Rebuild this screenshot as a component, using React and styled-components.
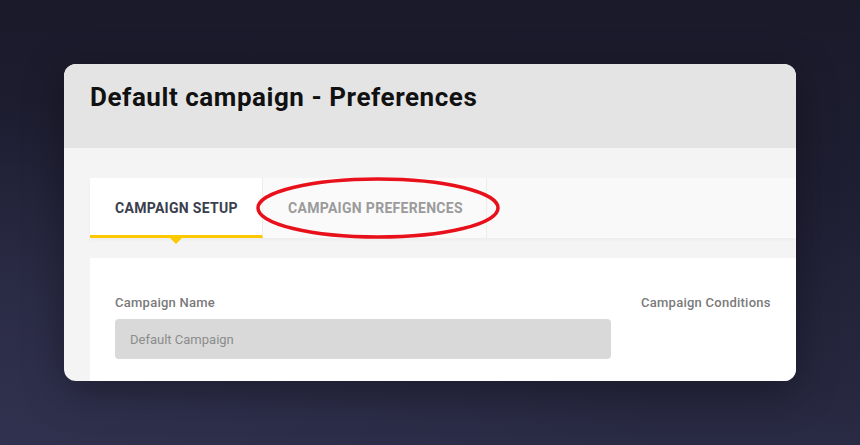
import React from "react";
import styled, { createGlobalStyle } from "styled-components";

const GlobalStyle = createGlobalStyle`
  html, body {
    margin: 0;
    padding: 0;
    width: 100%;
    height: 100%;
  }
  body {
    font-family: Roboto, "Liberation Sans", sans-serif;
    background: #1d1d30;
  }
`;

const Backdrop = styled.div`
  width: 860px;
  height: 445px;
  box-sizing: border-box;
  padding: 64px 64px 0 64px;
  background: radial-gradient(ellipse at 0% 100%, #30314e 0%, rgba(48, 49, 78, 0) 55%),
    linear-gradient(180deg, #1a1a2b 0%, #1e1e32 40%, #292a43 100%);
  overflow: hidden;
`;

const Card = styled.div`
  position: relative;
  width: 732px;
  height: 317px;
  border-radius: 12px;
  overflow: hidden;
  background: #f4f4f4;
  box-shadow: 0 10px 40px rgba(0, 0, 0, 0.35);
  display: flex;
  flex-direction: column;
`;

const Header = styled.div`
  height: 84px;
  flex-shrink: 0;
  background: #e4e4e4;
  box-sizing: border-box;
  padding: 18px 26px 0;
`;

const Title = styled.h1`
  margin: 0;
  font-size: 26px;
  font-weight: 700;
  color: #111;
  letter-spacing: 0.55px;
`;

const Body = styled.div`
  flex: 1;
  padding: 30px 0 0 26px;
  display: flex;
  flex-direction: column;
  gap: 20px;
`;

const TabBar = styled.div`
  display: flex;
  height: 60px;
  background: #f9f9f9;
  box-shadow: 0 2px 4px rgba(0, 0, 0, 0.03);
`;

const Tab = styled.div`
  position: relative;
  display: flex;
  align-items: center;
  flex-shrink: 0;
  box-sizing: border-box;
  padding-left: 25px;
  width: ${(p) => p.$width}px;
  white-space: nowrap;
  background: ${(p) => (p.$active ? "#fff" : "#fafafa")};
  border-right: 1px solid #ececec;
  font-size: 14px;
  font-weight: 700;
  letter-spacing: 0.3px;
  color: ${(p) => (p.$active ? "#3a3e4d" : "#9b9b9b")};
  ${(p) =>
    p.$active &&
    `
    border-bottom: 3px solid #fcc900;
    padding-top: 3px;
    &::after {
      content: "";
      position: absolute;
      left: 50%;
      bottom: -9px;
      transform: translateX(-50%);
      border-left: 6px solid transparent;
      border-right: 6px solid transparent;
      border-top: 6px solid #fcc900;
    }
  `}
`;

const Panel = styled.div`
  flex: 1;
  background: #fff;
  padding: 37px 25px 0;
  display: flex;
  gap: 30px;
`;

const Field = styled.div`
  display: flex;
  flex-direction: column;
  gap: 9px;
  width: ${(p) => (p.$width ? `${p.$width}px` : "auto")};
`;

const Label = styled.label`
  font-size: 13px;
  font-weight: 500;
  color: #7a7a7a;
  letter-spacing: 0.25px;
  line-height: 15px;
  white-space: nowrap;
`;

const Input = styled.div`
  height: 40px;
  border-radius: 4px;
  background: #d9d9d9;
  display: flex;
  align-items: center;
  padding: 0 15px;
  font-size: 13px;
  color: #8c8c8c;
`;

const Mark = styled.svg`
  position: absolute;
  left: 190px;
  top: 111px;
  pointer-events: none;
`;

export default function App() {
  return (
    <>
      <GlobalStyle />
      <Backdrop>
        <Card>
          <Header>
            <Title>Default campaign - Preferences</Title>
          </Header>
          <Body>
            <TabBar>
              <Tab $active $width={173}>CAMPAIGN SETUP</Tab>
              <Tab $width={224}>CAMPAIGN PREFERENCES</Tab>
            </TabBar>
            <Panel>
              <Field $width={496}>
                <Label>Campaign Name</Label>
                <Input>Default Campaign</Input>
              </Field>
              <Field>
                <Label>Campaign Conditions</Label>
              </Field>
            </Panel>
          </Body>
          <Mark width="248" height="66" viewBox="0 0 248 66">
            <ellipse
              cx="124"
              cy="33"
              rx="120"
              ry="29"
              fill="none"
              stroke="#e8111b"
              strokeWidth="3.5"
            />
          </Mark>
        </Card>
      </Backdrop>
    </>
  );
}
